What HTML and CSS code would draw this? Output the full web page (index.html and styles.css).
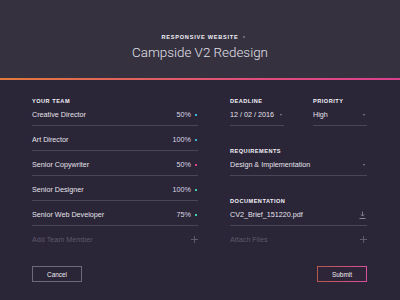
FILE: index.html
```html
<!DOCTYPE html>
<html>
<head>
<meta charset="utf-8">
<link rel="stylesheet" href="styles.css">
</head>
<body>
<header class="header">
  <div class="kicker">RESPONSIVE WEBSITE<span class="kdot"></span></div>
  <h1 class="title">Campside V2 Redesign</h1>
</header>
<div class="rule"></div>
<main class="main">
  <div class="cols">
    <section class="col left">
      <div class="label">YOUR TEAM</div>
      <div class="row first"><span class="name">Creative Director</span><span class="pct">50%</span><span class="dot cyan"></span></div>
      <div class="row"><span class="name">Art Director</span><span class="pct">100%</span><span class="dot cyan"></span></div>
      <div class="row"><span class="name">Senior Copywriter</span><span class="pct">50%</span><span class="dot pink"></span></div>
      <div class="row"><span class="name">Senior Designer</span><span class="pct">100%</span><span class="dot teal"></span></div>
      <div class="row"><span class="name">Senior Web Developer</span><span class="pct">75%</span><span class="dot teal"></span></div>
      <div class="row add"><span class="name muted">Add Team Member</span>
        <svg class="plus" width="7" height="7" viewBox="0 0 7 7"><path d="M3.5 0V7M0 3.5H7" stroke="#5e596b" stroke-width="1"/></svg>
      </div>
    </section>
    <section class="col right">
      <div class="pair">
        <div class="field date">
          <div class="label">DEADLINE</div>
          <div class="row first"><span class="name">12 / 02 / 2016</span><span class="caret"></span></div>
        </div>
        <div class="field prio">
          <div class="label">PRIORITY</div>
          <div class="row first"><span class="name">High</span><span class="caret"></span></div>
        </div>
      </div>
      <div class="field gap">
        <div class="label">REQUIREMENTS</div>
        <div class="row first"><span class="name">Design &amp; Implementation</span><span class="caret"></span></div>
      </div>
      <div class="field gap">
        <div class="label">DOCUMENTATION</div>
        <div class="row first"><span class="name">CV2_Brief_151220.pdf</span>
          <svg class="dl" width="7" height="8" viewBox="0 0 7 8"><path d="M3.5 0.5V5M1.8 3.4L3.5 5.1L5.2 3.4" stroke="#8a8598" stroke-width="0.9" fill="none"/><path d="M0.5 7.5H6.5" stroke="#8a8598" stroke-width="1"/></svg>
        </div>
      </div>
      <div class="row add"><span class="name muted">Attach Files</span>
        <svg class="plus" width="7" height="7" viewBox="0 0 7 7"><path d="M3.5 0V7M0 3.5H7" stroke="#5e596b" stroke-width="1"/></svg>
      </div>
    </section>
  </div>
  <div class="actions">
    <button class="btn cancel">Cancel</button>
    <button class="btn submit">Submit</button>
  </div>
</main>
</body>
</html>
```
FILE: styles.css
```css
html, body {
  margin: 0;
  padding: 0;
  background: #2a2537;
  width: 400px;
  height: 300px;
  overflow: hidden;
  font-family: "Liberation Sans", Arial, sans-serif;
  color: #e6e3ec;
}
.header {
  height: 78px;
  background: #35313f;
  box-sizing: border-box;
  padding-top: 25px;
  text-align: center;
}
.kicker {
  font-size: 5.6px;
  font-weight: bold;
  letter-spacing: 0.75px;
  line-height: 10px;
  color: #f2f0f6;
  position: relative;
  display: inline-block;
}
.kdot {
  position: absolute;
  right: -7px;
  top: 4px;
  width: 2px;
  height: 2px;
  background: #7c788a;
  border-radius: 1px;
}
.title {
  margin: 2px 0 0;
  font-family: Roboto, "Liberation Sans", sans-serif;
  font-weight: 300;
  font-size: 13.4px;
  line-height: 16px;
  color: #e2e0ea;
}
.rule {
  height: 2px;
  background: linear-gradient(to right, #e27a3c, #e0507a 60%, #d9418e);
}
.main {
  padding: 16px 33px 0 32px;
}
.cols {
  display: grid;
  grid-template-columns: 166px 137px;
  column-gap: 32px;
}
.label {
  font-size: 5.6px;
  font-weight: bold;
  letter-spacing: 0.5px;
  line-height: 11px;
  color: #f4f2f8;
}
.row {
  height: 24px;
  box-sizing: content-box;
  border-bottom: 1px solid #4a4558;
  display: flex;
  align-items: flex-end;
  padding-bottom: 0;
  font-size: 7.2px;
  line-height: 8px;
}
.row.first { height: 18px; }
.row .name, .row .pct {
  padding-bottom: 6px;
}
.row .name { flex: 1; white-space: nowrap; }
.row .pct { color: #dddae4; }
.row.add { border-bottom: none; }
.muted { color: #5e596b; }
.dot {
  width: 2px;
  height: 2px;
  margin-left: 4px;
  margin-right: 1px;
  margin-bottom: 9px;
}
.cyan { background: #3bb7dc; }
.pink { background: #e0437c; }
.teal { background: #3fd0b4; }
.plus {
  margin-bottom: 7px;
}
.pair {
  display: grid;
  grid-template-columns: 54px 54px;
  column-gap: 29px;
}
.gap { margin-top: 20px; }
.caret {
  width: 0;
  height: 0;
  border-left: 1.5px solid transparent;
  border-right: 1.5px solid transparent;
  border-top: 2px solid #8a8598;
  margin-bottom: 9px;
  margin-right: 2px;
}
.dl { margin-bottom: 6px; margin-right: 1px; }
.actions {
  display: flex;
  justify-content: space-between;
  margin-top: 16px;
}
.btn {
  width: 50px;
  height: 16px;
  box-sizing: border-box;
  padding: 0;
  font-family: "Liberation Sans", Arial, sans-serif;
  font-size: 6.4px;
  color: #eeecf2;
  background: transparent;
  border: 1px solid #6e6a7c;
}
.submit {
  border: 1px solid;
  border-image: linear-gradient(to right, #b5584d, #d9509a) 1;
  background: #2e2638;
}
```
